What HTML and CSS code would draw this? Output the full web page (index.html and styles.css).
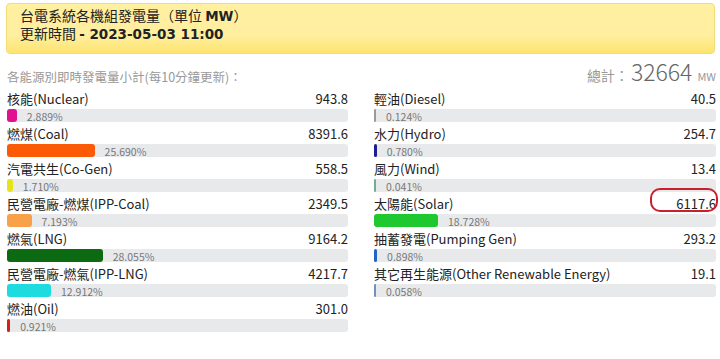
FILE: index.html
```html
<!DOCTYPE html>
<html lang="zh-Hant">
<head>
  <meta charset="UTF-8" />
  <meta name="viewport" content="width=device-width, initial-scale=1.0"/>
  <title>台電系統各機組發電量</title>
  <link rel="stylesheet" href="styles.css">
</head>
<body>

  <div class="banner">
    <div>台電系統各機組發電量（單位 <strong>MW</strong>）</div>
    <div>更新時間 <strong>- 2023-05-03 11:00</strong></div>
  </div>

  <div class="summary">
    <div class="subtitle">各能源別即時發電量小計(每10分鐘更新)：</div>
    <div class="total">總計：<span class="total-num">32664</span><span class="unit">MW</span></div>
  </div>

  <div class="columns">
    <div class="col">
      <div class="item">
        <div class="line"><span>核能(Nuclear)</span><span>943.8</span></div>
        <div class="bar"><div class="fill" style="width: 2.889%; background: #e0128f;"></div><span class="pct">2.889%</span></div>
      </div>
      <div class="item">
        <div class="line"><span>燃煤(Coal)</span><span>8391.6</span></div>
        <div class="bar"><div class="fill" style="width: 25.690%; background: #fb5a06;"></div><span class="pct">25.690%</span></div>
      </div>
      <div class="item">
        <div class="line"><span>汽電共生(Co-Gen)</span><span>558.5</span></div>
        <div class="bar"><div class="fill" style="width: 1.710%; background: #e6e21c;"></div><span class="pct">1.710%</span></div>
      </div>
      <div class="item">
        <div class="line"><span>民營電廠-燃煤(IPP-Coal)</span><span>2349.5</span></div>
        <div class="bar"><div class="fill" style="width: 7.193%; background: #f8a04a;"></div><span class="pct">7.193%</span></div>
      </div>
      <div class="item">
        <div class="line"><span>燃氣(LNG)</span><span>9164.2</span></div>
        <div class="bar"><div class="fill" style="width: 28.055%; background: #0b6a12;"></div><span class="pct">28.055%</span></div>
      </div>
      <div class="item">
        <div class="line"><span>民營電廠-燃氣(IPP-LNG)</span><span>4217.7</span></div>
        <div class="bar"><div class="fill" style="width: 12.912%; background: #1edbe0;"></div><span class="pct">12.912%</span></div>
      </div>
      <div class="item">
        <div class="line"><span>燃油(Oil)</span><span>301.0</span></div>
        <div class="bar"><div class="fill" style="width: 0.921%; background: #d91c1c;"></div><span class="pct">0.921%</span></div>
      </div>
    </div>

    <div class="col">
      <div class="item">
        <div class="line"><span>輕油(Diesel)</span><span>40.5</span></div>
        <div class="bar"><div class="fill" style="width: 0.124%; background: #9a9a9a;"></div><span class="pct">0.124%</span></div>
      </div>
      <div class="item">
        <div class="line"><span>水力(Hydro)</span><span>254.7</span></div>
        <div class="bar"><div class="fill" style="width: 0.780%; background: #1c1c96;"></div><span class="pct">0.780%</span></div>
      </div>
      <div class="item">
        <div class="line"><span>風力(Wind)</span><span>13.4</span></div>
        <div class="bar"><div class="fill" style="width: 0.041%; background: #6fae92;"></div><span class="pct">0.041%</span></div>
      </div>
      <div class="item highlight">
        <div class="line"><span>太陽能(Solar)</span><span>6117.6</span></div>
        <div class="bar"><div class="fill" style="width: 18.728%; background: #1ec92f;"></div><span class="pct">18.728%</span></div>
        <div class="ring"></div>
      </div>
      <div class="item">
        <div class="line"><span>抽蓄發電(Pumping Gen)</span><span>293.2</span></div>
        <div class="bar"><div class="fill" style="width: 0.898%; background: #2464c4;"></div><span class="pct">0.898%</span></div>
      </div>
      <div class="item">
        <div class="line"><span>其它再生能源(Other Renewable Energy)</span><span>19.1</span></div>
        <div class="bar"><div class="fill" style="width: 0.058%; background: #6f91c0;"></div><span class="pct">0.058%</span></div>
      </div>
    </div>
  </div>

</body>
</html>
```

FILE: styles.css
```css
body {
  margin: 0;
  font-family: 'Noto Sans CJK TC', 'Liberation Sans', sans-serif;
  color: #333;
  background: #fff;
}

.banner {
  margin: 3px 5px 0 6px;
  height: 37px;
  padding: 3px 13px 9px;
  border: 1px solid #f2dc7a;
  border-radius: 4px;
  background: linear-gradient(#fff0a2, #ffee9e 65%, #fde46e);
  font-size: 14px;
  line-height: 17px;
  color: #222;
}

.banner strong {
  font-family: 'DejaVu Sans', 'Noto Sans CJK TC', sans-serif;
  font-size: 13.5px;
  font-weight: bold;
}

.summary {
  display: flex;
  justify-content: space-between;
  align-items: flex-end;
  margin: 8px 4px 0 7px;
  height: 27px;
}

.subtitle {
  font-size: 12.5px;
  color: #999;
  line-height: 18px;
  padding-bottom: 3px;
}

.total {
  font-size: 14px;
  color: #999;
  line-height: 26px;
}

.total-num {
  font-size: 23px;
  font-weight: 300;
  color: #666;
  margin: 0 5px 0 2px;
}

.unit {
  font-size: 11px;
}

.columns {
  display: grid;
  grid-template-columns: 341px 342px;
  column-gap: 26px;
  margin-left: 7px;
}

.item {
  position: relative;
  margin-bottom: 2px;
}

.line {
  display: flex;
  justify-content: space-between;
  font-size: 13px;
  line-height: 20px;
  color: #222;
}

.bar {
  display: flex;
  height: 13px;
  background: #e8e9eb;
  border-radius: 3px;
}

.fill {
  height: 100%;
  min-width: 2px;
  border-radius: 3px;
}

.pct {
  margin-left: 10px;
  padding-top: 1px;
  font-size: 10.5px;
  line-height: 13px;
  color: #777;
}

.ring {
  position: absolute;
  top: -6px;
  right: -2px;
  width: 64px;
  height: 20px;
  border: 2.5px solid #c91f2e;
  border-radius: 10px;
}
```
